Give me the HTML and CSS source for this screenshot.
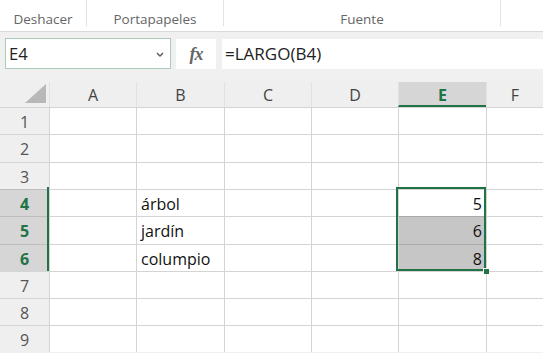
FILE: index.html
```html
<!DOCTYPE html>
<html lang="es">
<head>
<meta charset="utf-8">
<title>LARGO</title>
<link rel="stylesheet" href="styles.css">
</head>
<body>
<div class="ribbon">
  <div class="group g-undo">Deshacer</div>
  <div class="group g-clip">Portapapeles</div>
  <div class="group g-font">Fuente</div>
  <div class="group g-rest"></div>
</div>
<div class="fbar">
  <div class="namebox">
    <span>E4</span>
    <svg class="chev" width="8" height="5" viewBox="0 0 8 5"><path d="M1 1 L4 4 L7 1" fill="none" stroke="#555" stroke-width="1.3"/></svg>
  </div>
  <div class="fxbtn"><span>fx</span></div>
  <div class="formula">=LARGO(B4)</div>
</div>
<div class="sheet">
  <div class="corner"><div class="tri"></div></div>
  <div class="ch">A</div><div class="ch">B</div><div class="ch">C</div><div class="ch">D</div><div class="ch ch-sel">E</div><div class="ch">F</div>

  <div class="rh">1</div><div class="c"></div><div class="c"></div><div class="c"></div><div class="c"></div><div class="c"></div><div class="c"></div>
  <div class="rh">2</div><div class="c"></div><div class="c"></div><div class="c"></div><div class="c"></div><div class="c"></div><div class="c"></div>
  <div class="rh">3</div><div class="c"></div><div class="c"></div><div class="c"></div><div class="c"></div><div class="c"></div><div class="c"></div>
  <div class="rh rh-sel">4</div><div class="c"></div><div class="c">árbol</div><div class="c"></div><div class="c"></div><div class="c num">5</div><div class="c"></div>
  <div class="rh rh-sel">5</div><div class="c"></div><div class="c">jardín</div><div class="c"></div><div class="c"></div><div class="c num hl">6</div><div class="c"></div>
  <div class="rh rh-sel">6</div><div class="c"></div><div class="c">columpio</div><div class="c"></div><div class="c"></div><div class="c num hl">8</div><div class="c"></div>
  <div class="rh">7</div><div class="c"></div><div class="c"></div><div class="c"></div><div class="c"></div><div class="c"></div><div class="c"></div>
  <div class="rh">8</div><div class="c"></div><div class="c"></div><div class="c"></div><div class="c"></div><div class="c"></div><div class="c"></div>
  <div class="rh">9</div><div class="c"></div><div class="c"></div><div class="c"></div><div class="c"></div><div class="c"></div><div class="c"></div>

  <div class="rowmark"></div>
  <div class="selection"><div class="handle"></div></div>
</div>
</body>
</html>
```

FILE: styles.css
```css
* { box-sizing: border-box; }
html, body { margin: 0; padding: 0; }
body {
  width: 543px;
  height: 353px;
  overflow: hidden;
  background: #f0f0f0;
  font-family: "Open Sans", "Noto Sans", sans-serif;
  color: #222;
}

.ribbon {
  height: 32px;
  background: #fff;
  border-bottom: 1px solid #d9d9d9;
  display: flex;
}
.group {
  height: 26px;
  display: flex;
  align-items: flex-end;
  justify-content: center;
  font-size: 13.5px;
  color: #666;
  border-right: 1px solid #e3e3e3;
  line-height: 1;
  padding-bottom: 0;
}
.g-undo { width: 87px; }
.g-clip { width: 137px; }
.g-font { width: 277px; }
.g-rest { flex: 1; border-right: 0; }

.fbar {
  height: 50px;
  padding-top: 6px;
  display: flex;
  align-items: flex-start;
}
.namebox {
  margin-left: 5px;
  width: 166px;
  height: 31px;
  background: #fff;
  border: 1px solid #a9cbb8;
  display: flex;
  align-items: center;
  justify-content: space-between;
  padding: 0 6px 0 3px;
  font-size: 16.5px;
  color: #222;
}
.chev { margin-top: 2px; }
.fxbtn {
  margin-left: 5px;
  width: 40px;
  height: 30px;
  margin-top: 1px;
  background: #fff;
  display: flex;
  align-items: center;
  justify-content: center;
}
.fxbtn span {
  font-family: "Liberation Serif", serif;
  font-style: italic;
  font-weight: bold;
  font-size: 18px;
  color: #666;
  letter-spacing: -1px;
}
.formula {
  margin-left: 6px;
  flex: 1;
  height: 30px;
  margin-top: 1px;
  background: #fff;
  font-size: 17px;
  line-height: 30px;
  padding-left: 3px;
  color: #222;
}

.sheet {
  position: relative;
  display: grid;
  grid-template-columns: 49px 87px 88px 87px 87px 88px 1fr;
  grid-template-rows: 25px 27px 28px 27px 27px 28px 27px 27px 27px 27px;
  background: #fff;
}
.corner {
  background: #efefef;
  position: relative;
}
.tri {
  position: absolute;
  left: 25px;
  top: 2px;
  width: 0;
  height: 0;
  border-left: 21px solid transparent;
  border-bottom: 19px solid #b8b8b8;
}
.ch {
  background: #efefef;
  border-left: 1px solid #e2e2e2;
  display: flex;
  align-items: center;
  justify-content: center;
  font-size: 16px;
  color: #444;
  padding-top: 1px;
}
.ch-sel {
  background: #d6d6d6;
  border-bottom: 2px solid #217346;
  color: #217346;
  font-weight: bold;
  padding-top: 2px;
}
.rh {
  background: #efefef;
  border-top: 1px solid #d4d4d4;
  display: flex;
  align-items: center;
  justify-content: center;
  font-size: 16px;
  color: #555;
  padding-top: 1px;
}
.rh-sel {
  background: #d6d6d6;
  color: #217346;
  font-weight: bold;
  border-top-color: #bdbdbd;
}
.c {
  border-top: 1px solid #d4d4d4;
  border-left: 1px solid #d4d4d4;
  font-size: 16px;
  color: #111;
  display: flex;
  align-items: center;
  padding: 1px 4px 0 4px;
}
.num { justify-content: flex-end; }
.hl { background: #c6c6c6; border-top-color: #a9a9a9; }

.rowmark {
  position: absolute;
  left: 47px;
  top: 105px;
  width: 2px;
  height: 84px;
  background: #217346;
}
.selection {
  position: absolute;
  left: 396px;
  top: 105px;
  width: 90px;
  height: 84px;
  border: 2px solid #217346;
}
.handle {
  position: absolute;
  right: -5px;
  bottom: -5px;
  width: 6px;
  height: 6px;
  background: #217346;
  border: 1px solid #fff;
  border-right: 0;
  border-bottom: 0;
}
```
